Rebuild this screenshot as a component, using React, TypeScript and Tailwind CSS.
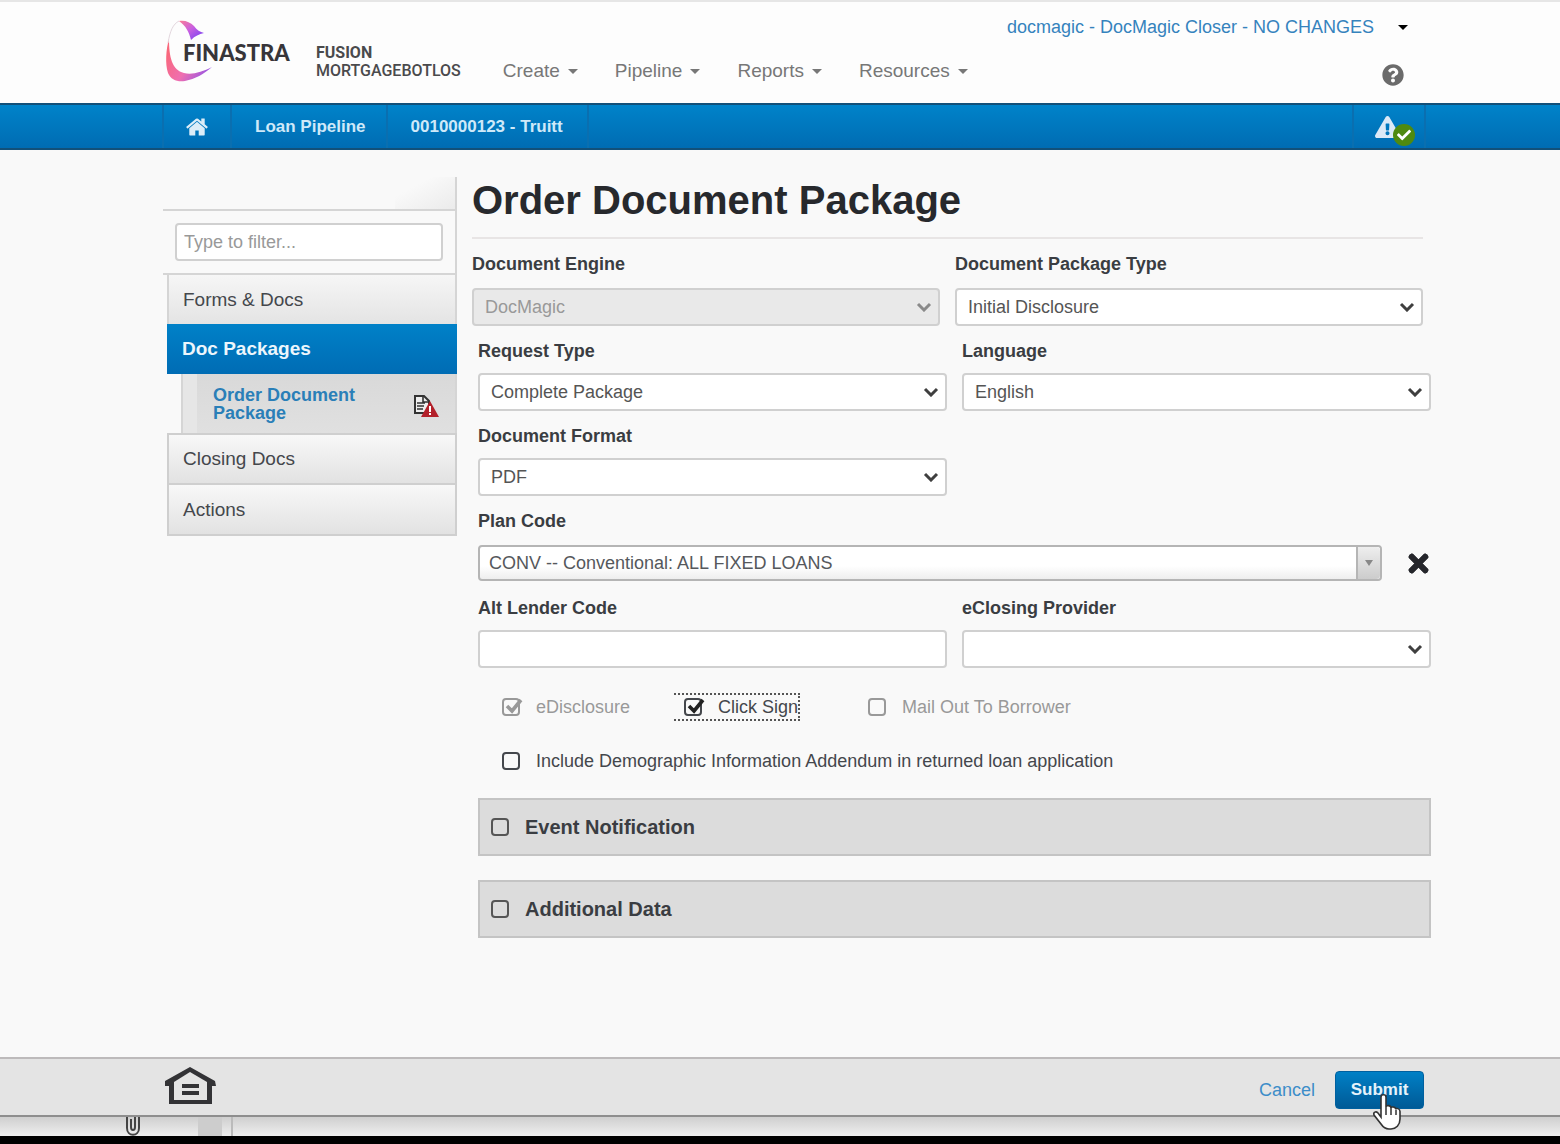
import type { ReactNode } from "react";
import { FaCheck, FaExclamationTriangle, FaQuestionCircle } from "react-icons/fa";

function Caret({ className = "" }: { className?: string }) {
  return (
    <svg viewBox="0 0 10 5" className={`h-[5px] w-[10px] ${className}`} aria-hidden="true">
      <path d="M0 0h10L5 5z" fill="currentColor" />
    </svg>
  );
}

function HomeIcon() {
  return (
    <svg viewBox="0 0 1792 1792" className="h-6 w-6" fill="currentColor" aria-hidden="true">
      <path d="M1472 992v480q0 26-19 45t-45 19h-384v-384h-256v384h-384q-26 0-45-19t-19-45v-480q0-1 .5-3t.5-3l575-474 575 474q1 2 1 6zm223-69l-62 74q-8 9-21 11h-3q-13 0-21-7l-692-577-692 577q-12 8-24 7-13-2-21-11l-62-74q-8-10-7-23.5t11-21.5l719-599q32-26 76-26t76 26l244 204v-195q0-14 9-23t23-9h192q14 0 23 9t9 23v408l219 182q10 8 11 21.5t-7 23.5z" />
    </svg>
  );
}

function Logo() {
  return (
    <a href="#home" className="relative flex h-[68px] w-[128px] shrink-0 items-center pl-[20px]">
      <svg viewBox="0 0 60 68" className="absolute left-0 top-0 h-[68px] w-[60px]" aria-hidden="true">
        <defs>
          <linearGradient id="swooshTop" x1="0" y1="0" x2="1" y2="1">
            <stop offset="0" stopColor="#fb7d94" />
            <stop offset="0.45" stopColor="#c95fe0" />
            <stop offset="1" stopColor="#6a3df5" />
          </linearGradient>
          <linearGradient id="swooshSide" x1="0" y1="0.4" x2="1" y2="1">
            <stop offset="0" stopColor="#f9687c" />
            <stop offset="0.45" stopColor="#ef6fb0" />
            <stop offset="1" stopColor="#7b4df5" />
          </linearGradient>
        </defs>
        <path d="M16 2c6-1 11 1 15 5 3 4 6 6 10 7-5 1-9 3-13 7-2-8-5-14-12-19z" fill="url(#swooshTop)" />
        <path d="M6 20C3 30 2 45 5 54c3 7 9 9 17 8 10-2 19-7 27-14-10 5-20 8-28 6C9 51 6 38 6 20z" fill="url(#swooshSide)" />
        <path d="M5 24C7 12 10 5 16 2" fill="none" stroke="#e3d7de" strokeWidth="1" />
      </svg>
      <span className="relative font-['Lato',sans-serif] text-[22px] font-black leading-6 text-[#373539]">FINASTRA</span>
    </a>
  );
}

function NavMenu({ label }: { label: string }) {
  return (
    <button type="button" className="flex items-center gap-2 text-[19px] leading-6 text-[#777]">
      {label}
      <Caret />
    </button>
  );
}

function Field({ id, label, gap = "gap-[10px]", children }: { id: string; label: string; gap?: string; children: ReactNode }) {
  return (
    <div className={`flex min-w-0 flex-1 flex-col ${gap}`}>
      <label htmlFor={id} className="self-start text-[18px] font-bold leading-6 text-[#3a3d42]">
        {label}
      </label>
      {children}
    </div>
  );
}

function SelectBox({ id, value, disabled = false }: { id: string; value: string; disabled?: boolean }) {
  return (
    <div className="relative">
      <select
        id={id}
        disabled={disabled}
        className="h-[38px] w-full appearance-none rounded border-2 border-[#d0d0d0] bg-white pl-[11px] pr-10 text-[18px] text-[#555] opacity-100 disabled:bg-[#e9e9e9] disabled:text-[#999]"
      >
        <option>{value}</option>
      </select>
      <svg
        viewBox="0 0 16 10"
        className={`pointer-events-none absolute right-2 top-[14px] h-[10px] w-[16px] ${disabled ? "text-[#8a8a8a]" : "text-[#3f3f3f]"}`}
        fill="none"
        stroke="currentColor"
        strokeWidth="3"
        aria-hidden="true"
      >
        <path d="M2 2l6 6 6-6" />
      </svg>
    </div>
  );
}

function Tick({ id, label, checked = false, disabled = false }: { id: string; label: string; checked?: boolean; disabled?: boolean }) {
  return (
    <label
      htmlFor={id}
      className={`flex items-center gap-[14px] text-[18px] leading-6 ${disabled ? "text-[#999]" : "text-[#44474c]"}`}
    >
      <span className="relative flex h-5 w-[20px] items-center">
        <input
          id={id}
          type="checkbox"
          defaultChecked={checked}
          disabled={disabled}
          className="h-[18px] w-[18px] appearance-none rounded border-2 border-current bg-transparent"
        />
        {checked && (
          <svg viewBox="0 0 20 20" className="pointer-events-none absolute left-0 top-0 h-5 w-[22px]" fill="none" aria-hidden="true">
            <path d="M4 9l5 5 9-11" stroke={disabled ? "#999" : "#222"} strokeWidth="3.6" />
          </svg>
        )}
      </span>
      {label}
    </label>
  );
}

function SectionPanel({ id, label }: { id: string; label: string }) {
  return (
    <section className="flex h-[58px] items-center border-2 border-[#c4c4c4] bg-[#dcdcdc] px-[11px]">
      <label htmlFor={id} className="flex items-center gap-4 text-[20px] font-bold leading-6 text-[#3a3d42]">
        <input id={id} type="checkbox" className="h-[18px] w-[18px] appearance-none rounded border-2 border-[#555]" />
        {label}
      </label>
    </section>
  );
}

function Sidebar() {
  return (
    <aside className="w-[294px] shrink-0 pt-[27px]">
      <div className="border-r-2 border-[#d5d5d5]">
        <div className="ml-auto h-8 w-[60px] bg-linear-to-tl from-[#ebebeb] to-transparent to-70%" />
        <div className="border-y-2 border-[#d5d5d5] py-[12px] pl-3 pr-[12px]">
          <input
            type="text"
            aria-label="Type to filter"
            placeholder="Type to filter..."
            className="h-[38px] w-full rounded border-2 border-[#d0d0d0] bg-white px-[7px] text-[18px] placeholder:text-[#999]"
          />
        </div>
      </div>
      <nav className="ml-1 flex flex-col text-[19px] leading-6 text-[#44474c]">
        <a href="#forms" className="flex h-[49px] items-center border-x-2 border-[#d5d5d5] bg-linear-to-b from-[#f6f6f6] to-[#e4e4e4] pl-[14px]">
          Forms &amp; Docs
        </a>
        <a href="#packages" className="flex h-[50px] items-center bg-linear-to-b from-[#0081c8] to-[#006cb4] pl-[15px] font-bold text-[#edf6fc]">
          Doc Packages
        </a>
        <a
          href="#order"
          className="ml-[14px] flex h-[59px] items-center justify-between border-l-2 border-r-2 border-[#d5d5d5] bg-[#e6e6e6] text-[18px] font-bold leading-[18px] text-[#2a7fb8]"
        >
          <span className="ml-[14px] flex flex-1 items-center self-stretch bg-linear-to-b from-[#d9d9d9] to-[#e0e0e0] pl-4">
            <span className="max-w-[160px] flex-1">Order Document Package</span>
            <svg viewBox="0 0 26 24" className="ml-auto mr-4 mt-1 h-6 w-[26px]" aria-hidden="true">
              <path d="M2 2h9l5 5v12H2z" fill="#eee" stroke="#333" strokeWidth="2" />
              <path d="M10 2v6h6M4 9h8M4 12h7M4 15h6" fill="none" stroke="#333" strokeWidth="1.6" />
              <path d="M17 7l9 16H8z" fill="#b3202a" />
              <path d="M17 12v6M17 19v2" stroke="#fff" strokeWidth="2" />
            </svg>
          </span>
        </a>
        <a href="#closing" className="flex h-[50px] items-center border-2 border-b-0 border-[#cfcfcf] bg-linear-to-b from-[#f8f8f8] to-[#e2e2e2] pl-[14px]">
          Closing Docs
        </a>
        <a href="#actions" className="flex h-[53px] items-center border-2 border-[#cfcfcf] bg-linear-to-b from-[#f8f8f8] to-[#e2e2e2] pl-[14px]">
          Actions
        </a>
      </nav>
    </aside>
  );
}

function OrderForm() {
  return (
    <main className="ml-[15px] min-w-0 flex-1 pt-[26px]">
      <h1 className="mr-2 border-b-2 border-[#e8e5e5] pb-[13px] text-[40px] font-bold leading-[48px] text-[#27292d]">
        Order Document Package
      </h1>
      <div className="mr-2 mt-[13px] flex gap-[15px]">
        <Field id="engine" label="Document Engine" gap="gap-3">
          <SelectBox id="engine" value="DocMagic" disabled />
        </Field>
        <Field id="ptype" label="Document Package Type" gap="gap-3">
          <SelectBox id="ptype" value="Initial Disclosure" />
        </Field>
      </div>
      <div className="ml-[6px] mt-[13px] flex flex-col gap-[13px]">
        <div className="flex gap-[15px]">
          <Field id="rtype" label="Request Type">
            <SelectBox id="rtype" value="Complete Package" />
          </Field>
          <Field id="lang" label="Language">
            <SelectBox id="lang" value="English" />
          </Field>
        </div>
        <div className="flex gap-[15px]">
          <Field id="format" label="Document Format">
            <SelectBox id="format" value="PDF" />
          </Field>
          <div className="flex-1" />
        </div>
        <Field id="plan" label="Plan Code" gap="gap-3">
          <div className="flex items-center justify-between">
            <div className="relative mr-6 flex-1">
              <select
                id="plan"
                className="h-[36px] w-full appearance-none rounded border-2 border-[#b5b5b5] bg-linear-to-b from-white from-60% to-[#eee] pl-[9px] text-[18px] text-[#55585c]"
              >
                <option>CONV -- Conventional: ALL FIXED LOANS</option>
              </select>
              <span className="pointer-events-none absolute inset-y-[2px] right-[2px] flex w-[24px] items-center justify-center rounded-r-sm border-l-2 border-[#b5b5b5] bg-linear-to-b from-[#eee] to-[#ccc] text-[#888]">
                <svg viewBox="0 0 8 6" className="h-[6px] w-2" aria-hidden="true">
                  <path d="M0 0h8L4 6z" fill="currentColor" />
                </svg>
              </span>
            </div>
            <button type="button" aria-label="Clear plan code">
              <svg viewBox="0 0 25 25" className="h-[25px] w-[25px]" fill="none" stroke="#25262b" aria-hidden="true">
                <path d="M5 5l15 15M20 5L5 20" strokeWidth="6" />
                <path d="M5 5l15 15M20 5L5 20" strokeWidth="4" strokeLinecap="round" />
                <path d="M4 4l17 17M21 4L4 21" strokeWidth="5.500" />
              </svg>
            </button>
          </div>
        </Field>
        <div className="mt-[2px] flex gap-[15px]">
          <Field id="lender" label="Alt Lender Code">
            <input id="lender" type="text" className="h-[38px] w-full rounded border-2 border-[#d0d0d0] bg-white px-3 text-[18px]" />
          </Field>
          <Field id="closing" label="eClosing Provider">
            <SelectBox id="closing" value="" />
          </Field>
        </div>
      </div>
      <div className="ml-[30px] mt-[25px] flex items-center">
        <Tick id="edisc" label="eDisclosure" checked disabled />
        <div className="ml-11 border-y-2 border-r-2 border-dotted border-[#555] pl-[10px]">
          <Tick id="csign" label="Click Sign" checked />
        </div>
        <div className="ml-[68px]">
          <Tick id="mail" label="Mail Out To Borrower" disabled />
        </div>
      </div>
      <div className="ml-[30px] mt-7">
        <Tick id="demo" label="Include Demographic Information Addendum in returned loan application" />
      </div>
      <div className="ml-[6px] mt-[25px] flex flex-col gap-6">
        <SectionPanel id="event" label="Event Notification" />
        <SectionPanel id="extra" label="Additional Data" />
      </div>
    </main>
  );
}

export default function App() {
  return (
    <div className="flex min-h-screen flex-col bg-[#f9f9f9] font-['Liberation_Sans',Arial,sans-serif]">
      <header className="flex h-[103px] items-start border-t-2 border-[#e6e6e6] bg-[#fdfdfd] pl-[163px] pr-[136px]">
        <div className="mt-[17px]">
          <Logo />
        </div>
        <div className="ml-[25px] mt-[42px] font-['Roboto',sans-serif] text-[16px] leading-[18px] text-[#4a4a4c]">
          <div className="font-bold">FUSION</div>
          <div className="font-medium">MORTGAGEBOTLOS</div>
        </div>
        <nav className="ml-[42px] mt-[57px] flex gap-[37px]">
          <NavMenu label="Create" />
          <NavMenu label="Pipeline" />
          <NavMenu label="Reports" />
          <NavMenu label="Resources" />
        </nav>
        <div className="ml-auto mr-4 mt-[13px] flex flex-col items-end gap-[25px]">
          <button type="button" className="flex items-center gap-[24px] text-[18px] leading-6 text-[#3583bd]">
            docmagic - DocMagic Closer - NO CHANGES
            <Caret className="text-black" />
          </button>
          <button type="button" aria-label="Help" className="mr-1">
            <FaQuestionCircle className="h-[22px] w-[22px] text-[#6b6b6b]" />
          </button>
        </div>
      </header>

      <nav className="flex h-[47px] border-y-2 border-[#125079] bg-linear-to-b from-[#0083c9] to-[#006cb3] pl-[162px] pr-[134px] text-[17px] font-bold text-[#cfe9f9]">
        <a href="#home" aria-label="Home" className="flex w-[68px] items-center justify-center border-l-2 border-[#0a6fb0] text-[#dcedf8]">
          <HomeIcon />
        </a>
        <a href="#pipeline" className="flex items-center border-l-2 border-[#0a6fb0] pl-[23px] pr-5">
          Loan Pipeline
        </a>
        <a href="#loan" className="flex items-center border-x-2 border-[#0a6fb0] pl-[23px] pr-6">
          0010000123 - Truitt
        </a>
        <a href="#alerts" aria-label="Alerts" className="relative ml-auto flex w-[74px] items-center border-x-2 border-[#0a6fb0] pl-[21px]">
          <FaExclamationTriangle className="h-[24px] w-[25px] text-[#dbe9f7]" />
          <span className="absolute bottom-[2px] right-[9px] flex h-[22px] w-[22px] items-center justify-center rounded-full bg-[#4f8a10]">
            <FaCheck className="h-[14px] w-[14px] text-white" />
          </span>
        </a>
      </nav>

      <div className="flex flex-1 items-start pb-6 pl-[163px] pr-[129px]">
        <Sidebar />
        <OrderForm />
      </div>

      <footer>
        <div className="flex h-[60px] items-start justify-between border-y-2 border-t-[#bdbabb] border-b-[#8e8e8e] bg-[#e4e4e4] pl-[165px] pr-[136px]">
          <svg viewBox="0 0 51 38" className="mt-2 h-[38px] w-[51px]" role="img" aria-label="Equal Housing Lender">
            <path d="M25 0l25 14 1 5h-4v18H4V19H0v-5z" fill="#333336" />
            <path d="M25 5l17 10v18H9V15z" fill="#e4e4e4" />
            <path d="M17 17h17v4H17zM17 24h17v4H17z" fill="#333336" />
          </svg>
          <div className="mt-3 flex items-center gap-5">
            <a href="#cancel" className="text-[18px] text-[#3c8dc9]">
              Cancel
            </a>
            <button
              type="submit"
              className="relative h-[38px] w-[89px] rounded border border-[#00609f] bg-linear-to-b from-[#0080c6] to-[#005a96] text-[17px] font-bold text-[#e6f3fb]"
            >
              Submit
              <svg viewBox="0 0 30 38" className="pointer-events-none absolute left-[36px] top-[21px] h-[38px] w-[30px]" aria-hidden="true">
                <path
                  d="M9 24V4c0-3 5-3 5 0v10c0-2 5-2 5 1 0-2 5-1 5 1.500 0-2 4-1 4 2V26c0 6-4 10-9 10h-2c-4 0-6-2-8-5l-7-9c-1-3 2-4 4-2z"
                  fill="#fff"
                  stroke="#333"
                  strokeWidth="1.600"
                />
                <path d="M14 14v8M19 15v7M24 17v5" fill="none" stroke="#333" strokeWidth="1.500" />
              </svg>
            </button>
          </div>
        </div>
        <div className="flex h-[19px] bg-linear-to-b from-[#cfcfcf] to-[#efefef] pl-[126px]">
          <svg viewBox="0 0 14 19" className="h-[19px] w-[14px]" fill="none" stroke="#444" strokeWidth="2" aria-hidden="true">
            <path d="M1 0v11c0 9 12 9 12 0V0M5 2v8c0 4 4 4 4 0V0" />
          </svg>
          <div className="ml-[58px] w-[24px] bg-[#cdcdcd]" />
          <div className="ml-[9px] w-[2px] bg-[#bbb]" />
        </div>
        <div className="h-2 bg-black" />
      </footer>
    </div>
  );
}
